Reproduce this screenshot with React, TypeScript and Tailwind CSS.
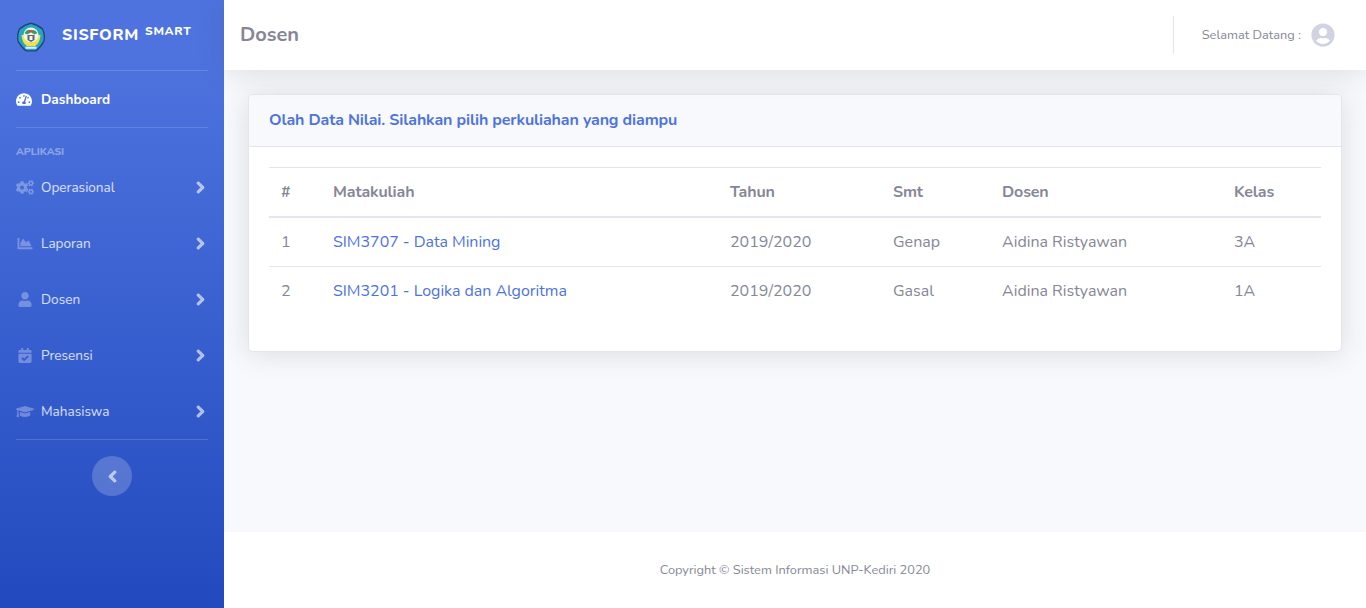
import { FaCalendarCheck, FaChartArea, FaChevronLeft, FaChevronRight, FaCogs, FaGraduationCap, FaTachometerAlt, FaUser, FaUserCircle } from "react-icons/fa";
import type { IconType } from "react-icons";

const menu: { label: string; icon: IconType }[] = [
  { label: "Operasional", icon: FaCogs },
  { label: "Laporan", icon: FaChartArea },
  { label: "Dosen", icon: FaUser },
  { label: "Presensi", icon: FaCalendarCheck },
  { label: "Mahasiswa", icon: FaGraduationCap },
];

const rows = [
  { no: 1, name: "SIM3707 - Data Mining", year: "2019/2020", smt: "Genap", dosen: "Aidina Ristyawan", kelas: "3A" },
  { no: 2, name: "SIM3201 - Logika dan Algoritma", year: "2019/2020", smt: "Gasal", dosen: "Aidina Ristyawan", kelas: "1A" },
];

// campus crest, small enough that only the colour blocks read
const Logo = () => (
  <svg width="30" height="30" viewBox="0 0 30 30" className="shrink-0">
    <path d="M15 0.5 Q22 2 27 6.5 Q30 13 28.5 19.5 Q25 26 20 29.5 H10 Q5 26 1.5 19.5 Q0 13 3 6.5 Q8 2 15 0.5 Z" fill="#27406f" />
    <path d="M15 2 Q21.5 3.5 26 7.5 Q28.5 13 27.3 19 Q24 25 19.5 28.2 H10.5 Q6 25 2.7 19 Q1.5 13 4 7.5 Q8.5 3.5 15 2 Z" fill="#25a5c5" />
    <path d="M5.5 13 Q6 21 11 24 H19 Q24 21 24.5 13 L21 13 Q21 20 15 20.5 Q9 20 9 13 Z" fill="#f2e044" />
    <circle cx="15" cy="13" r="7.6" fill="#eef5ee" />
    <path d="M8.5 11 Q11 7 14 8 L14 11 L11 12.5 Z" fill="#3f9d58" />
    <path d="M16 8 Q19.5 7.5 21.5 11 L18.5 12.5 L16 11 Z" fill="#3f9d58" />
    <circle cx="15" cy="9.3" r="1.5" fill="#d8453c" />
    <path d="M11.5 13 H18.5 V18 L15 20 L11.5 18 Z" fill="#5a6472" />
    <path d="M13.5 14 H16.5 V18 H13.5 Z" fill="#f6f6ee" />
    <rect x="9.5" y="24.6" width="11" height="2.2" fill="#dfeef2" />
  </svg>
);

const Divider = () => <hr className="mx-4 border-0 border-t border-white/15" />;

export default function App() {
  return (
    <div className="flex h-[608px] w-[1366px] overflow-hidden bg-[#f8f9fc] font-['Nunito','Lato',sans-serif] text-[#858796]">
      <aside className="flex w-[224px] shrink-0 flex-col bg-gradient-to-b from-[#4e73df] from-10% to-[#224abe]">
        <div className="flex h-[70px] items-center gap-4 pl-4 pt-1">
          <Logo />
          <div className="flex items-start pb-1 text-[16px] font-extrabold tracking-[0.7px] text-white">
            SISFORM
            <span className="ml-1.5 mt-[-1px] text-[12px] font-extrabold">SMART</span>
          </div>
        </div>
        <Divider />
        <div className="flex h-[56px] items-center gap-[9px] pl-4 text-[13.6px] font-bold text-white">
          <FaTachometerAlt className="w-[16px] text-[15px]" />
          <span className="pt-0.5">Dashboard</span>
        </div>
        <Divider />
        <div className="h-[31px] pl-4 pt-4 text-[10.4px] leading-[15px] font-extrabold uppercase text-white/40">Aplikasi</div>
        {menu.map(({ label, icon: Icon }) => (
          <div key={label} className="flex h-[56px] items-center pl-4 pr-[17px] text-[13.6px] text-white/80">
            <Icon className="w-[18px] text-[15px] text-white/30" />
            <span className="ml-[7px] flex-1 pt-0.5">{label}</span>
            <FaChevronRight className="text-[13px] text-white/50" stroke="currentColor" strokeWidth={50} />
          </div>
        ))}
        <Divider />
        <button type="button" className="mx-auto mt-4 flex h-10 w-10 items-center justify-center rounded-full bg-white/20 text-[13px] text-white/50">
          <FaChevronLeft stroke="currentColor" strokeWidth={50} />
        </button>
      </aside>

      <div className="flex min-w-0 flex-1 flex-col">
        <header className="z-10 flex h-[70px] shrink-0 items-center justify-between bg-white pl-4 pr-[31px] shadow-[0_2px_28px_rgba(58,59,69,0.15)]">
          <h1 className="text-[20px] font-bold">Dosen</h1>
          <div className="flex items-center">
            <div className="mr-7 h-[38px] w-px bg-[#e3e6f0]" />
            <span className="mr-[10px] pt-0.5 text-[12.8px]">Selamat Datang :</span>
            <FaUserCircle className="text-[24px] text-[#d1d3e2]" />
          </div>
        </header>

        <main className="flex-1 px-6 pt-6">
          <section className="h-[258px] overflow-hidden rounded-[5px] border border-[#e3e6f0] bg-white shadow-[0_2px_28px_rgba(58,59,69,0.15)]">
            <div className="flex h-[52px] items-center border-b border-[#e3e6f0] bg-[#f8f9fc] px-5 pb-0.5 text-[16px] font-bold tracking-[-0.13px] text-[#4e73df]">
              Olah Data Nilai. Silahkan pilih perkuliahan yang diampu
            </div>
            <div className="px-5 pt-5">
              <table className="w-full table-fixed border-collapse text-left text-[16px]">
                <thead className="tracking-[-0.13px]">
                  <tr className="h-[49px] border-t border-b-2 border-[#e3e6f0]">
                    <th className="w-[52px] px-3 font-bold">#</th>
                    <th className="w-[397px] px-3 font-bold">Matakuliah</th>
                    <th className="w-[163px] px-3 font-bold">Tahun</th>
                    <th className="w-[109px] px-3 font-bold">Smt</th>
                    <th className="w-[232px] px-3 font-bold">Dosen</th>
                    <th className="px-3 font-bold">Kelas</th>
                  </tr>
                </thead>
                <tbody>
                  {rows.map((row) => (
                    <tr key={row.no} className="h-[49px] border-b border-[#e3e6f0] first:h-[50px] last:border-b-0">
                      <td className="px-3">{row.no}</td>
                      <td className="px-3 tracking-[-0.04px] text-[#4e73df]">{row.name}</td>
                      <td className="px-3">{row.year}</td>
                      <td className="px-3">{row.smt}</td>
                      <td className="px-3">{row.dosen}</td>
                      <td className="px-3">{row.kelas}</td>
                    </tr>
                  ))}
                </tbody>
              </table>
            </div>
          </section>
        </main>

        <footer className="flex h-[76px] shrink-0 items-center justify-center bg-white pt-0.5 text-[12.8px]">
          Copyright © Sistem Informasi UNP-Kediri 2020
        </footer>
      </div>
    </div>
  );
}
